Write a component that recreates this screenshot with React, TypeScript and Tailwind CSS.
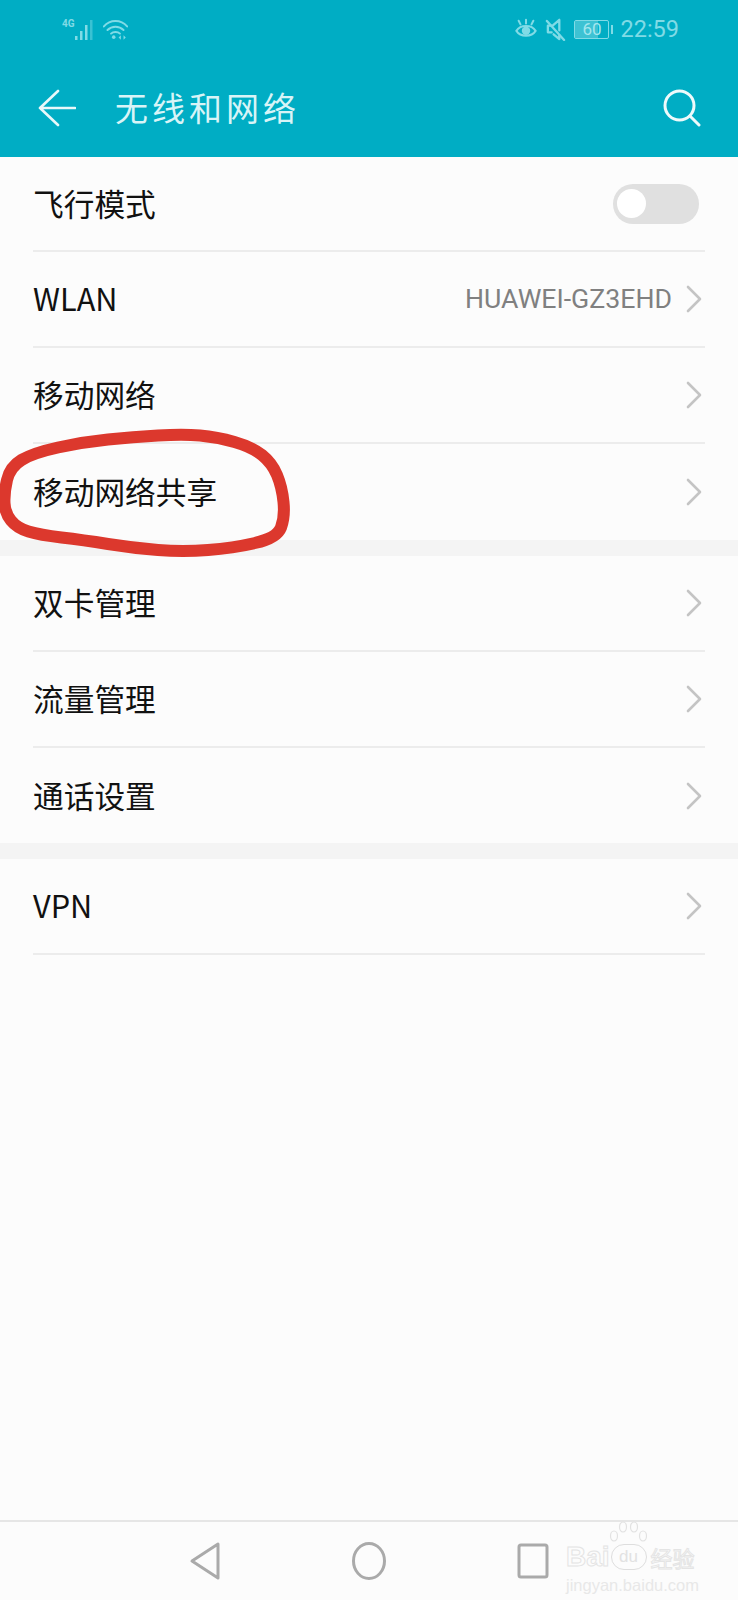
import React from "react";

const font = { fontFamily: '"Noto Sans CJK SC", Roboto, sans-serif' };

function Chevron() {
  return (
    <svg width="18" height="28" viewBox="0 0 18 28" fill="none" stroke="#c4c4c4" strokeWidth="2.6" strokeLinecap="round" strokeLinejoin="round">
      <path d="M3 2 L15 14 L3 26" />
    </svg>
  );
}

function Row({ label, value, toggle, last, h = "h-[96px]" }: { label: string; value?: string; toggle?: boolean; last?: boolean; h?: string }) {
  return (
    <div className={`flex items-center justify-between mx-[33px] ${h} ${last ? "" : "border-b-2 border-[#ececec]"}`}>
      <span className="text-[30.7px] text-[#111] leading-none pb-[1px]">{label}</span>
      {toggle ? (
        <div className="w-[86px] h-[40px] rounded-full bg-[#e0e0e0] flex items-center pl-[4px] mr-[6px]">
          <div className="w-[29px] h-[29px] rounded-full bg-white" />
        </div>
      ) : (
        <div className="flex items-center gap-[13px] mr-[2px]">
          {value && <span className="text-[26.7px] text-[#808080] leading-none pt-[1px]" style={{ fontFamily: "Roboto, sans-serif" }}>{value}</span>}
          <Chevron />
        </div>
      )}
    </div>
  );
}

function Divider() {
  return <div className="h-[16px] bg-[#f4f4f4]" />;
}

const ring: [number, number][] = [
  [4, 493], [10, 467], [33, 453], [83, 442], [133, 437], [183, 434], [217, 437], [252, 447], [272, 463], [282, 487],
  [285, 517], [277, 538], [233, 548], [183, 552], [133, 548], [83, 540], [40, 535], [17, 528], [5, 513],
];
const mid = (a: [number, number], b: [number, number]) => `${(a[0] + b[0]) / 2} ${(a[1] + b[1]) / 2}`;
const ringPath =
  `M${mid(ring[ring.length - 1], ring[0])} ` +
  ring.map((p, i) => `Q${p[0]} ${p[1]} ${mid(p, ring[(i + 1) % ring.length])}`).join(" ") +
  " Z";

const outline = "text-transparent [-webkit-text-stroke:1px_#e4e4e4]";

export default function App() {
  return (
    <div className="relative w-[738px] h-[1600px] bg-[#fcfcfc] overflow-hidden flex flex-col" style={font}>
      <header className="h-[157px] bg-[#00adc4] flex flex-col shrink-0">
        <div className="h-[58px] flex items-center justify-between pl-[62px] pr-[59px] text-[#80dbe6]">
          <div className="flex items-center gap-[6px] pt-[1px]">
            <svg width="35" height="24" viewBox="0 0 35 24" fill="#80dbe6">
              <text x="0" y="9" fontSize="10" fontWeight="700" fill="#80dbe6" fontFamily="Roboto, sans-serif">4G</text>
              <rect x="13" y="18" width="2.5" height="4" />
              <rect x="18" y="13" width="2.5" height="9" />
              <rect x="23" y="7" width="2.5" height="15" />
              <rect x="28" y="2" width="2.5" height="20" opacity="0.45" />
            </svg>
            <svg width="25" height="22" viewBox="0 0 28 24" fill="none" stroke="#80dbe6" strokeWidth="2.2" strokeLinecap="round">
              <path d="M1 8 C8 0 20 0 27 8" />
              <path d="M5 12 C10 7 18 7 23 12" />
              <path d="M9 16 C11.5 13.5 16.5 13.5 19 16" />
              <circle cx="12" cy="20" r="2" fill="#80dbe6" stroke="none" />
              <path d="M20 18 L17.5 20.5 L20 23 Z M23 18 L25.5 20.5 L23 23 Z" fill="#80dbe6" stroke="none" />
            </svg>
          </div>
          <div className="flex items-center">
            <svg width="22" height="22" viewBox="0 0 24 24" fill="none" stroke="#80dbe6" strokeWidth="2.2" strokeLinecap="round">
              <path d="M1.5 14 C6 7 18 7 22.5 14 C18 21 6 21 1.5 14 Z" />
              <circle cx="12" cy="14" r="4.6" fill="#80dbe6" stroke="none" />
              <path d="M6 7 L4 3 M12 6 L12 2 M18 7 L20 3" />
            </svg>
            <svg className="ml-[8px]" width="21" height="23" viewBox="0 0 22 24" fill="none" stroke="#80dbe6" strokeWidth="2.4" strokeLinecap="round" strokeLinejoin="round">
              <path d="M15 2 L15 13 M15 2 L8 8 L3 8 L3 15 L7 15" />
              <path d="M2 3 L20 23" />
              <path d="M9 17 L15 22 L15 18" />
            </svg>
            <div className="ml-[8px] w-[35px] h-[19px] rounded-[2px] border border-[#80dbe6] relative overflow-hidden flex items-center justify-center">
              <div className="absolute left-0 top-0 bottom-0 w-[23px] bg-[#66d0dd]/60" />
              <span className="relative text-[17px] leading-none text-[#a5e6ee]" style={{ fontFamily: "Roboto, sans-serif" }}>60</span>
            </div>
            <div className="w-[2px] h-[9px] bg-[#80dbe6] ml-[2px]" />
            <span className="ml-[7px] text-[23.5px] leading-none pt-[2px]" style={{ fontFamily: "Roboto, sans-serif", fontWeight: 400 }}>22:59</span>
          </div>
        </div>
        <div className="flex-1 flex items-center pl-[38px] pr-[37px]">
          <svg width="38" height="38" viewBox="0 0 38 38" fill="none" stroke="#e8f8fa" strokeWidth="2.6" strokeLinecap="round" strokeLinejoin="round">
            <path d="M20 2 L2 19 L20 36 M2 19 L37 19" />
          </svg>
          <span className="ml-[39px] text-[33px] tracking-[4px] leading-none text-[#d8f4f7] font-normal">无线和网络</span>
          <svg className="ml-auto" width="38" height="38" viewBox="0 0 38 38" fill="none" stroke="#eefafb" strokeWidth="3" strokeLinecap="round">
            <circle cx="16.5" cy="16.5" r="14.5" />
            <path d="M27 27 L36 36" />
          </svg>
        </div>
      </header>

      <main className="flex-1 flex flex-col">
        <Row label="飞行模式" toggle h="h-[95px]" />
        <Row label="WLAN" value="HUAWEI-GZ3EHD" />
        <Row label="移动网络" />
        <Row label="移动网络共享" last />
        <Divider />
        <Row label="双卡管理" />
        <Row label="流量管理" />
        <Row label="通话设置" last h="h-[95px]" />
        <Divider />
        <Row label="VPN" />
      </main>

      <footer className="h-[80px] border-t-2 border-[#e6e6e6] shrink-0 relative flex items-center">
        <svg className="ml-[189px]" width="32" height="40" viewBox="0 0 32 40" fill="none" stroke="#aaaaaa" strokeWidth="3" strokeLinejoin="round">
          <path d="M29 3 L29 37 L3 20 Z" />
        </svg>
        <svg className="ml-[130px]" width="36" height="40" viewBox="0 0 36 40" fill="none" stroke="#aaaaaa" strokeWidth="3">
          <ellipse cx="18" cy="20" rx="15.5" ry="17.5" />
        </svg>
        <svg className="ml-[130px]" width="32" height="36" viewBox="0 0 32 36" fill="none" stroke="#aaaaaa" strokeWidth="3" strokeLinejoin="round">
          <rect x="2" y="2" width="28" height="32" rx="2" />
        </svg>
        <div className="absolute left-[566px] top-[21px] w-[140px]">
          <svg className="absolute left-[43px] top-[-22px]" width="40" height="34" viewBox="0 0 40 34" fill="none" stroke="#e2e2e2" strokeWidth="1.2">
            <ellipse cx="5" cy="15" rx="3.5" ry="5" />
            <ellipse cx="14" cy="6" rx="3.5" ry="5" />
            <ellipse cx="25" cy="6" rx="3.5" ry="5" />
            <ellipse cx="34" cy="15" rx="3.5" ry="5" />
          </svg>
          <div className="flex items-center leading-none">
            <span className={`text-[28px] font-bold ${outline}`} style={{ fontFamily: '"Liberation Sans", sans-serif' }}>Bai</span>
            <span className="ml-[1px] w-[36px] h-[26px] rounded-full border border-[#dedede] text-[17px] text-center leading-[23px] text-[#e2e2e2]" style={{ fontFamily: '"Liberation Sans", sans-serif' }}>du</span>
            <span className={`ml-[4px] text-[22px] ${outline}`}>经验</span>
          </div>
          <div className="text-[16.5px] leading-none mt-[6px] text-[#e8e8e8] whitespace-nowrap" style={{ fontFamily: '"Liberation Sans", sans-serif' }}>jingyan.baidu.com</div>
        </div>
      </footer>

      <svg className="absolute left-0 top-0 pointer-events-none" width="738" height="1600" viewBox="0 0 738 1600" fill="none">
        <path d={ringPath} stroke="#dc382d" strokeWidth="12" strokeLinejoin="round" />
      </svg>
    </div>
  );
}
